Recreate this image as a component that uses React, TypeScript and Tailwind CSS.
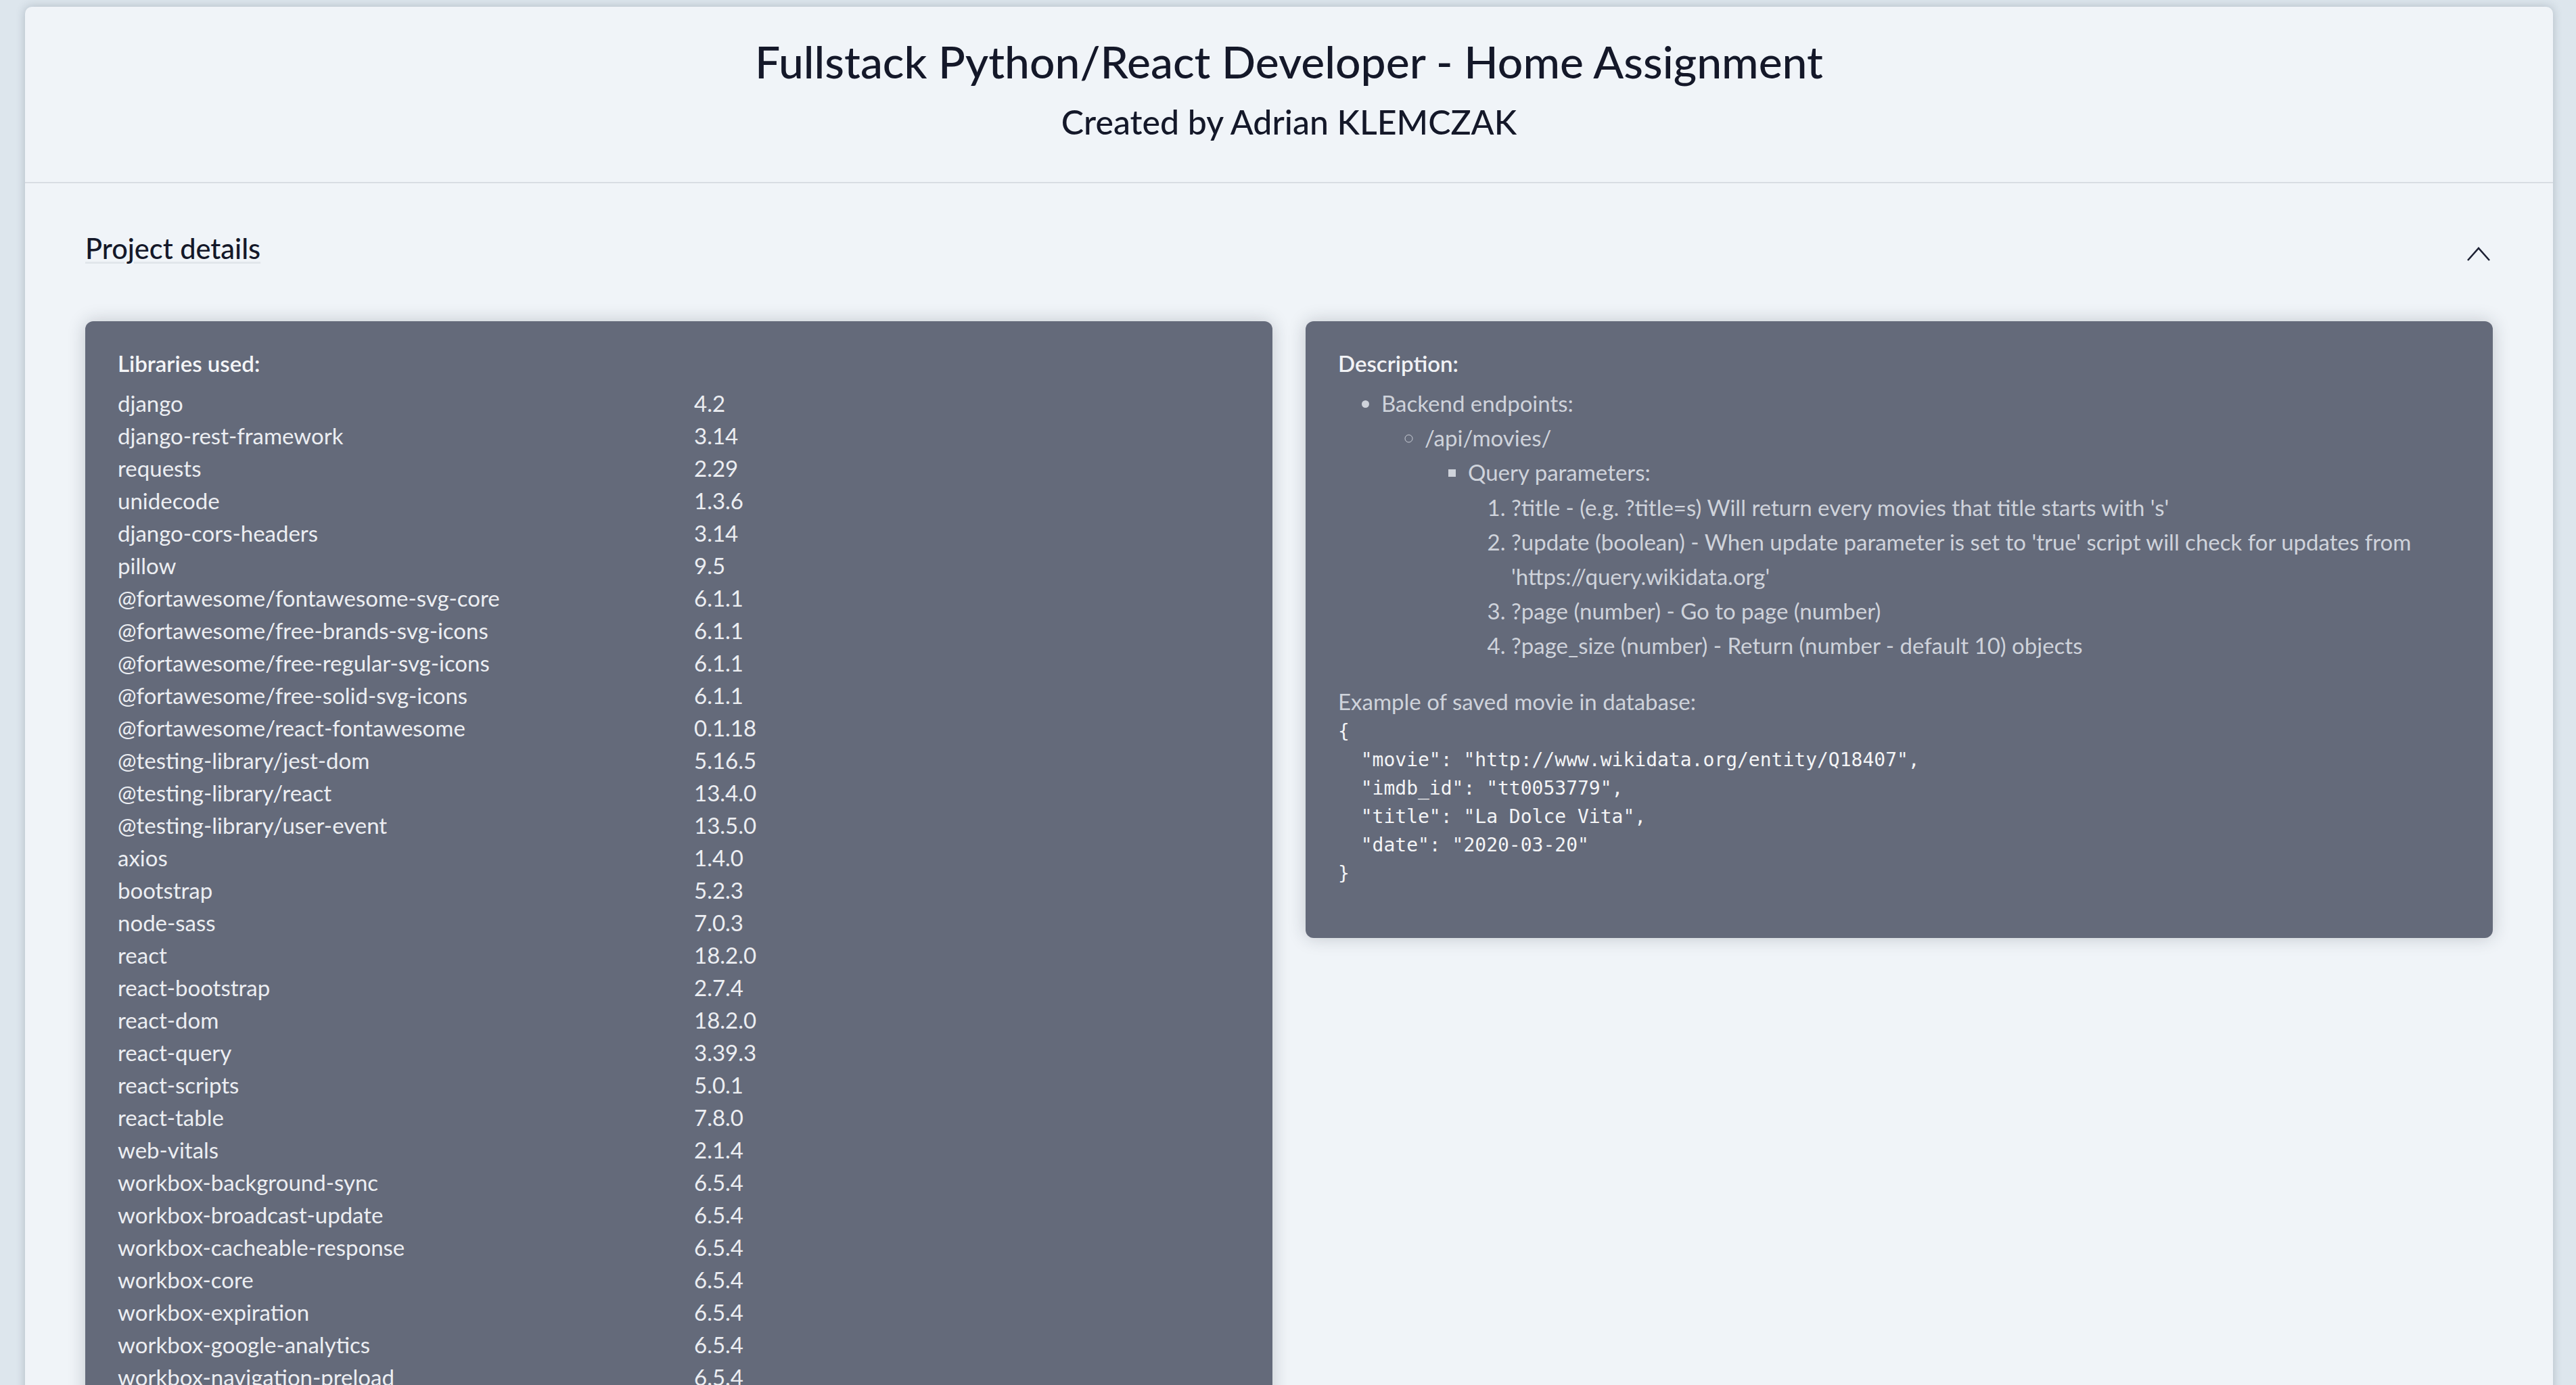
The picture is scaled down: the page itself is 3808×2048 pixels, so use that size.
import React from "react";

const libs: [string, string][] = [
  ["django", "4.2"],
  ["django-rest-framework", "3.14"],
  ["requests", "2.29"],
  ["unidecode", "1.3.6"],
  ["django-cors-headers", "3.14"],
  ["pillow", "9.5"],
  ["@fortawesome/fontawesome-svg-core", "6.1.1"],
  ["@fortawesome/free-brands-svg-icons", "6.1.1"],
  ["@fortawesome/free-regular-svg-icons", "6.1.1"],
  ["@fortawesome/free-solid-svg-icons", "6.1.1"],
  ["@fortawesome/react-fontawesome", "0.1.18"],
  ["@testing-library/jest-dom", "5.16.5"],
  ["@testing-library/react", "13.4.0"],
  ["@testing-library/user-event", "13.5.0"],
  ["axios", "1.4.0"],
  ["bootstrap", "5.2.3"],
  ["node-sass", "7.0.3"],
  ["react", "18.2.0"],
  ["react-bootstrap", "2.7.4"],
  ["react-dom", "18.2.0"],
  ["react-query", "3.39.3"],
  ["react-scripts", "5.0.1"],
  ["react-table", "7.8.0"],
  ["web-vitals", "2.1.4"],
  ["workbox-background-sync", "6.5.4"],
  ["workbox-broadcast-update", "6.5.4"],
  ["workbox-cacheable-response", "6.5.4"],
  ["workbox-core", "6.5.4"],
  ["workbox-expiration", "6.5.4"],
  ["workbox-google-analytics", "6.5.4"],
  ["workbox-navigation-preload", "6.5.4"],
  ["workbox-precaching", "6.5.4"],
  ["workbox-range-requests", "6.5.4"],
  ["workbox-routing", "6.5.4"],
  ["workbox-strategies", "6.5.4"],
  ["workbox-streams", "6.5.4"],
];

const code = `{
  "movie": "http://www.wikidata.org/entity/Q18407",
  "imdb_id": "tt0053779",
  "title": "La Dolce Vita",
  "date": "2020-03-20"
}`;

export default function App() {
  return (
    <div
      className="min-h-screen bg-[#dde6ed] pt-[10px] text-[#141829]"
      style={{ fontFamily: "Lato, 'Noto Sans', sans-serif" }}
    >
      <div className="ml-[37px] w-[3737px] rounded-t-[10px] bg-[#f0f4f8] shadow-[0_0_14px_rgba(40,55,75,0.25)]">
        {/* Header */}
        <div className="flex flex-col items-center border-b-2 border-[#d8dde3] pt-[42px] pb-[60px]">
          <h1 className="mb-[22px] text-[66px] leading-[77px] font-medium">
            Fullstack Python/React Developer - Home Assignment
          </h1>
          <h2 className="text-[50px] leading-[58px] font-medium">Created by Adrian KLEMCZAK</h2>
        </div>

        {/* Accordion */}
        <div className="px-[89px] pt-[72px] pb-[80px]">
          <div className="flex h-[48px] items-center justify-between">
            <span className="text-[41.5px] leading-[48px] font-medium underline decoration-[#e1e6eb] decoration-[3px] underline-offset-[4px]">
              Project details
            </span>
            <svg width="34" height="22" viewBox="0 0 34 22" className="mr-[4px] mt-[18px]">
              <polyline points="1,20 17,2 33,20" fill="none" stroke="#1c2033" strokeWidth="2.6" />
            </svg>
          </div>

          <div className="mt-[84px] grid grid-cols-2 items-start gap-[49px]">
            {/* Left panel */}
            <div className="rounded-[12px] bg-[#646a7a] px-[48px] pt-[38px] pb-[40px] text-[33px] text-[#eceef2] shadow-[0_0_26px_rgba(30,40,55,0.22)]">
              <div className="mb-[11px] leading-[48px] font-semibold text-[#f4f5f7]">Libraries used:</div>
              {libs.map(([n, v]) => (
                <div key={n} className="grid grid-cols-[852px_1fr] leading-[48px]">
                  <span>{n}</span>
                  <span>{v}</span>
                </div>
              ))}
            </div>

            {/* Right panel */}
            <div className="rounded-[12px] bg-[#646a7a] px-[48px] pt-[38px] pb-[42px] text-[33px] text-[#cfd3db] shadow-[0_0_26px_rgba(30,40,55,0.22)]">
              <div className="mb-[10px] leading-[48px] font-semibold text-[#f1f2f5]">Description:</div>
              <ul className="mb-[32px] list-disc pl-[64px] leading-[51.2px]">
                <li>
                  Backend endpoints:
                  <ul className="list-[circle] pl-[64px]">
                    <li>
                      /api/movies/
                      <ul className="list-[square] pl-[64px]">
                        <li>
                          Query parameters:
                          <ol className="list-decimal pl-[64px]">
                            <li>?title - (e.g. ?title=s) Will return every movies that title starts with 's'</li>
                            <li>
                              ?update (boolean) - When update parameter is set to 'true' script will check for updates
                              from 'https://query.wikidata.org'
                            </li>
                            <li>?page (number) - Go to page (number)</li>
                            <li>?page_size (number) - Return (number - default 10) objects</li>
                          </ol>
                        </li>
                      </ul>
                    </li>
                  </ul>
                </li>
              </ul>
              <p className="leading-[48px]">Example of saved movie in database:</p>
              <pre
                className="mb-[32px] text-[28px] leading-[42px] text-[#f3f4f6]"
                style={{ fontFamily: "'DejaVu Sans Mono', monospace" }}
              >
                {code}
              </pre>
            </div>
          </div>
        </div>
      </div>
    </div>
  );
}
